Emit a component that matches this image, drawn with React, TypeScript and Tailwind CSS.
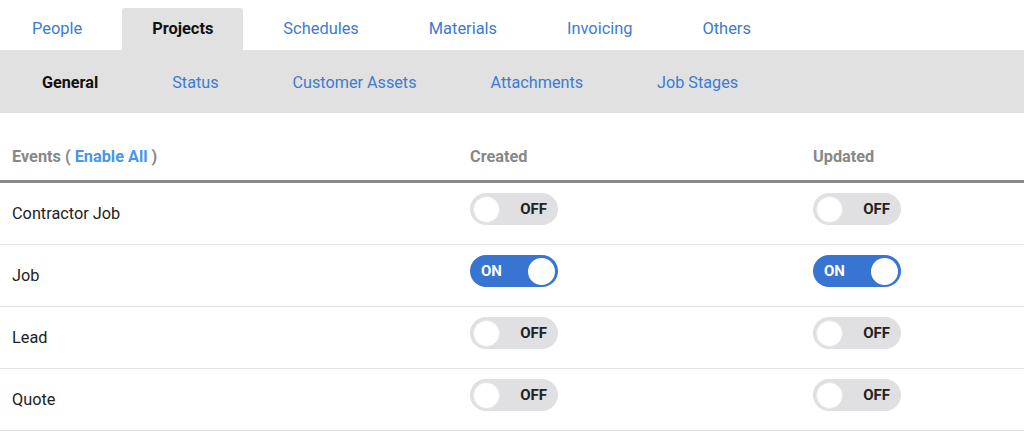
const topTabs = ["People", "Projects", "Schedules", "Materials", "Invoicing", "Others"];
const subTabs = ["General", "Status", "Customer Assets", "Attachments", "Job Stages"];

const events = [
  { name: "Contractor Job", created: false, updated: false },
  { name: "Job", created: true, updated: true },
  { name: "Lead", created: false, updated: false },
  { name: "Quote", created: false, updated: false },
];

function Toggle({ on }: { on: boolean }) {
  if (on) {
    return (
      <div className="flex h-[32px] w-[88px] items-center justify-between rounded-full bg-[#3874d1] pl-[11px] pr-[3px]">
        <span className="text-[15px] font-bold text-white">ON</span>
        <span className="h-[27px] w-[27px] rounded-full bg-white" />
      </div>
    );
  }
  return (
    <div className="flex h-[32px] w-[88px] items-center justify-between rounded-full bg-[#e0e0e2] pl-[3px] pr-[11px]">
      <span className="h-[27px] w-[27px] rounded-full border border-[#e8e8e8] bg-white" />
      <span className="text-[15px] font-bold text-[#222]">OFF</span>
    </div>
  );
}

export default function App() {
  return (
    <div className="h-[448px] w-[1024px] overflow-hidden bg-white font-['Roboto',sans-serif]">
      <nav className="flex gap-[10px] pl-[2px] pt-[8px]">
        {topTabs.map((t) => (
          <div
            key={t}
            className={
              t === "Projects"
                ? "flex h-[42px] items-center rounded-t-[3px] bg-[#e1e1e1] px-[30px] text-[16.4px] font-bold text-[#111]"
                : "flex h-[42px] items-center px-[30px] text-[16.4px] text-[#3c7bd3]"
            }
          >
            {t}
          </div>
        ))}
      </nav>
      <div className="flex h-[63px] items-center gap-[74px] bg-[#e1e1e1] pl-[42px] pt-[4px]">
        {subTabs.map((t) => (
          <span
            key={t}
            className={t === "General" ? "text-[16.2px] font-bold text-[#111]" : "text-[16.2px] text-[#3c7bd3]"}
          >
            {t}
          </span>
        ))}
      </div>

      <div className="grid grid-cols-[458px_343px_1fr] pt-[21px]">
        <div className="flex h-[46px] items-center px-3 text-[16.3px] font-bold text-[#888]">
          Events (&nbsp;<span className="text-[#4596ee]">Enable All</span>&nbsp;)
        </div>
        <div className="flex h-[46px] items-center px-3 text-[16.3px] font-bold text-[#888]">Created</div>
        <div className="flex h-[46px] items-center px-3 text-[16.3px] font-bold text-[#888]">Updated</div>
        <div className="col-span-3 h-[3px] bg-[#8a8a8a]" />
        {events.map((e) => (
          <div key={e.name} className="col-span-3 grid h-[62px] grid-cols-[458px_343px_1fr] border-b border-[#e2e2e2]">
            <div className="flex items-center px-3 pt-[1px] text-[16.3px] text-[#222]">{e.name}</div>
            <div className="flex items-center px-3 pb-[9px]">
              <Toggle on={e.created} />
            </div>
            <div className="flex items-center px-3 pb-[9px]">
              <Toggle on={e.updated} />
            </div>
          </div>
        ))}
      </div>
    </div>
  );
}
